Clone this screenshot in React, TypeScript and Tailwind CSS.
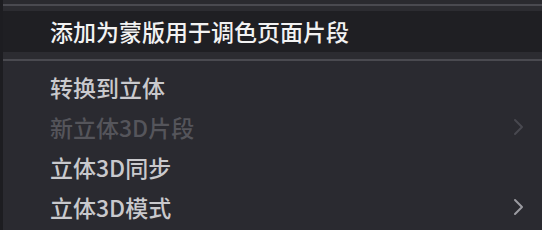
const items = [
  { label: "转换到立体", disabled: false, sub: false },
  { label: "新立体3D片段", disabled: true, sub: true },
  { label: "立体3D同步", disabled: false, sub: false },
  { label: "立体3D模式", disabled: false, sub: true },
];

function Chevron({ disabled }: { disabled: boolean }) {
  return (
    <svg width="11" height="18" viewBox="0 0 11 18" fill="none">
      <polyline
        points="2,2 9,9 2,16"
        stroke={disabled ? "#48484f" : "#9b9ba1"}
        strokeWidth="2"
        strokeLinecap="round"
        strokeLinejoin="round"
      />
    </svg>
  );
}

export default function App() {
  return (
    <div
      className="w-[542px] h-[230px] overflow-hidden bg-[#2a2a30] border-l-[3px] border-[#1d1d21] flex flex-col"
      style={{ fontFamily: '"Noto Sans CJK SC", "Noto Sans", sans-serif' }}
    >
      <div className="h-[4px] bg-[#2a2a2f]" />
      <div className="h-[2px] bg-[#4a4a50]" />
      <div className="h-[5px] bg-[#2c2c31]" />
      <div className="h-[41px] bg-[#1f1f23] flex items-center pl-[47px]">
        <span className="text-[23px] leading-none font-medium text-[#f2f2f2]">
          添加为蒙版用于调色页面片段
        </span>
      </div>
      <div className="h-[7px] bg-[#2c2c31]" />
      <div className="h-[2px] bg-[#4a4a50]" />
      <div className="flex flex-col pt-[6px]">
        {items.map((item) => (
          <div
            key={item.label}
            className="h-[40px] flex items-center justify-between pl-[47px] pr-[18px]"
          >
            <span
              className={
                item.disabled
                  ? "text-[23px] leading-none font-medium text-[#55555b]"
                  : "text-[23px] leading-none font-medium text-[#c9c9cd]"
              }
            >
              {item.label}
            </span>
            {item.sub && <Chevron disabled={item.disabled} />}
          </div>
        ))}
      </div>
    </div>
  );
}
